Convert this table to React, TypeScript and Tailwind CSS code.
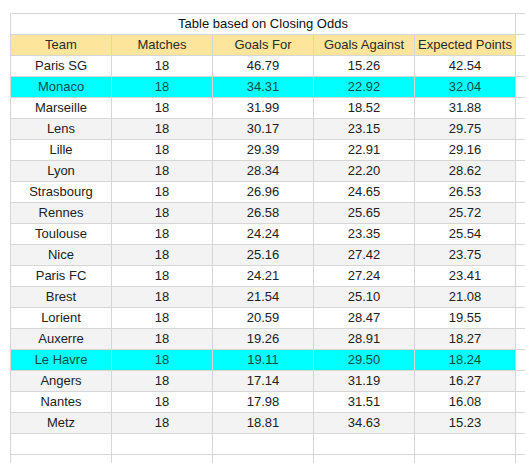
import React from 'react';

type Row = { team: string; matches: number; gf: string; ga: string; xp: string };

const rows: Row[] = [
  { team: 'Paris SG', matches: 18, gf: '46.79', ga: '15.26', xp: '42.54' },
  { team: 'Monaco', matches: 18, gf: '34.31', ga: '22.92', xp: '32.04' },
  { team: 'Marseille', matches: 18, gf: '31.99', ga: '18.52', xp: '31.88' },
  { team: 'Lens', matches: 18, gf: '30.17', ga: '23.15', xp: '29.75' },
  { team: 'Lille', matches: 18, gf: '29.39', ga: '22.91', xp: '29.16' },
  { team: 'Lyon', matches: 18, gf: '28.34', ga: '22.20', xp: '28.62' },
  { team: 'Strasbourg', matches: 18, gf: '26.96', ga: '24.65', xp: '26.53' },
  { team: 'Rennes', matches: 18, gf: '26.58', ga: '25.65', xp: '25.72' },
  { team: 'Toulouse', matches: 18, gf: '24.24', ga: '23.35', xp: '25.54' },
  { team: 'Nice', matches: 18, gf: '25.16', ga: '27.42', xp: '23.75' },
  { team: 'Paris FC', matches: 18, gf: '24.21', ga: '27.24', xp: '23.41' },
  { team: 'Brest', matches: 18, gf: '21.54', ga: '25.10', xp: '21.08' },
  { team: 'Lorient', matches: 18, gf: '20.59', ga: '28.47', xp: '19.55' },
  { team: 'Auxerre', matches: 18, gf: '19.26', ga: '28.91', xp: '18.27' },
  { team: 'Le Havre', matches: 18, gf: '19.11', ga: '29.50', xp: '18.24' },
  { team: 'Angers', matches: 18, gf: '17.14', ga: '31.19', xp: '16.27' },
  { team: 'Nantes', matches: 18, gf: '17.98', ga: '31.51', xp: '16.08' },
  { team: 'Metz', matches: 18, gf: '18.81', ga: '34.63', xp: '15.23' },
];

const highlighted = ['Monaco', 'Le Havre'];

const Cell: React.FC<{ children?: React.ReactNode }> = ({ children }) => (
  <div className="w-[101px] shrink-0 h-full border-r border-[#d6d6d6] flex items-center justify-center">
    {children}
  </div>
);

const Tail = () => <div className="w-[30px] shrink-0 h-full border-r border-[#e2e2e2]" />;

export default function App() {
  return (
    <div
      className="w-[525px] h-[463px] bg-white overflow-hidden pt-[13px] pl-[10px] text-[13px] text-[#222]"
      style={{ fontFamily: '"Liberation Sans", Arial, sans-serif' }}
    >
      <div className="border-t border-l border-[#d6d6d6] w-[600px]">
        {/* title row, merged across the five columns */}
        <div className="flex h-[21px] border-b border-[#d6d6d6]">
          <div className="w-[505px] shrink-0 h-full border-r border-[#d6d6d6] flex items-center justify-center text-[#111]">
            Table based on Closing Odds
          </div>
          <Tail />
        </div>

        <div className="flex h-[21px] border-b border-[#d6d6d6] text-[#2b2b2b]">
          <div className="flex h-full bg-[#fde59c]">
            <Cell>Team</Cell>
            <Cell>Matches</Cell>
            <Cell>Goals For</Cell>
            <Cell>Goals Against</Cell>
            <Cell>Expected Points</Cell>
          </div>
          <Tail />
        </div>

        {rows.map((r, i) => {
          const hl = highlighted.includes(r.team);
          const bg = hl ? 'bg-[#00ffff] text-[#0f4a4a]' : i % 2 === 1 ? 'bg-[#f3f3f3]' : 'bg-white';
          return (
            <div key={r.team} className="flex h-[21px] border-b border-[#d6d6d6]">
              <div className={`flex h-full ${bg}`}>
                <Cell>{r.team}</Cell>
                <Cell>{r.matches}</Cell>
                <Cell>{r.gf}</Cell>
                <Cell>{r.ga}</Cell>
                <Cell>{r.xp}</Cell>
              </div>
              <Tail />
            </div>
          );
        })}

        {/* empty rows below the table */}
        <div className="flex h-[21px] border-b border-[#d6d6d6]">
          <Cell />
          <Cell />
          <Cell />
          <Cell />
          <Cell />
          <Tail />
        </div>
        <div className="flex h-[21px] border-b border-[#d6d6d6]">
          <Cell />
          <Cell />
          <Cell />
          <Cell />
          <Cell />
          <Tail />
        </div>
      </div>
    </div>
  );
}
